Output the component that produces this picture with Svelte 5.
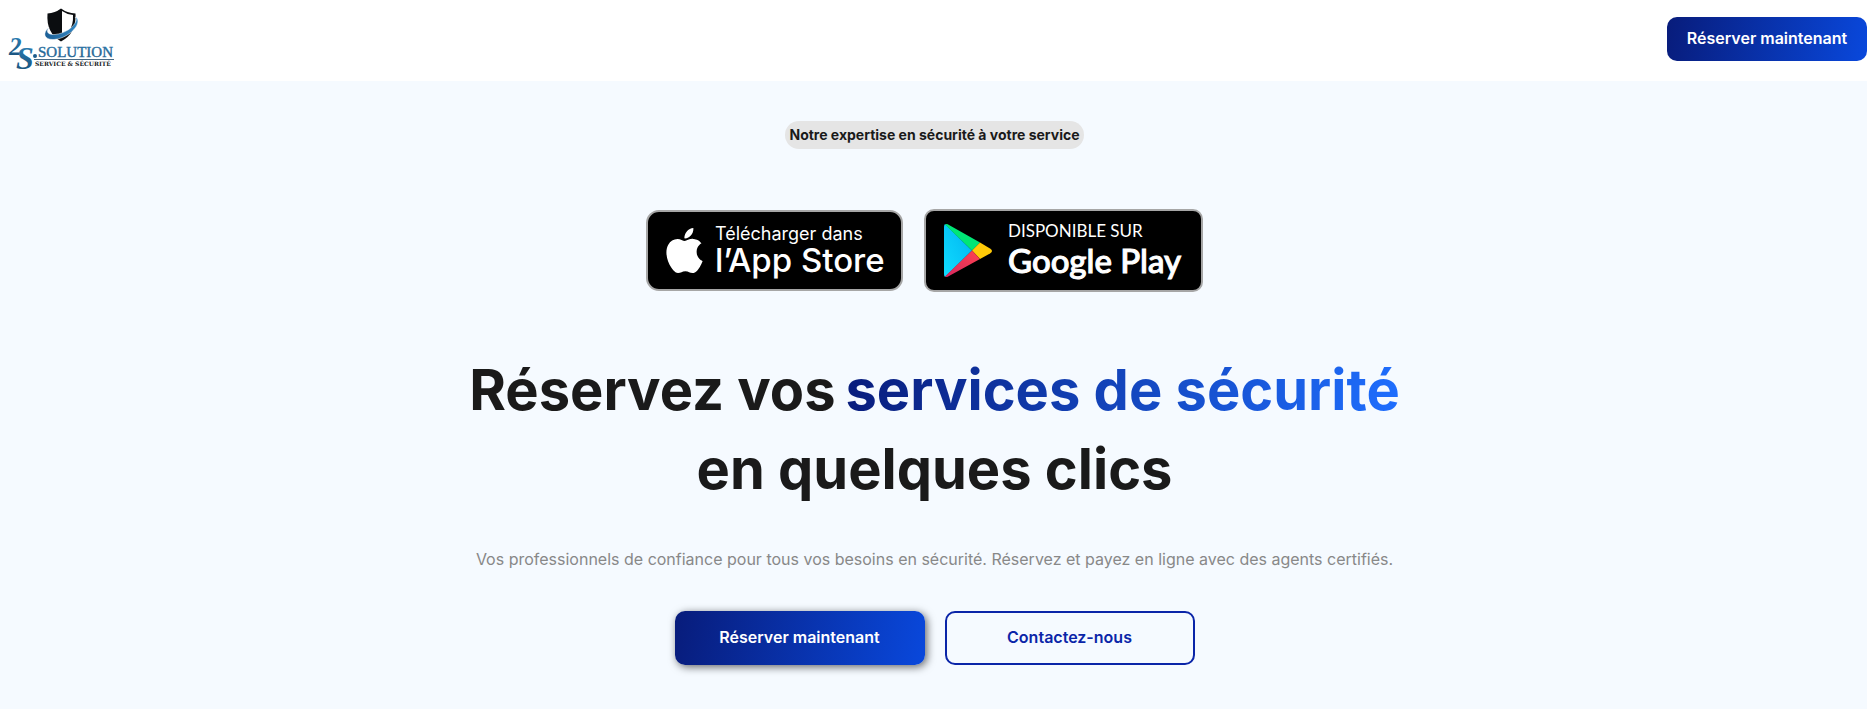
<script>
  const tagline = 'Notre expertise en sécurité à votre service';
</script>

<div class="page">
  <header>
    <a class="logo" href="#accueil" aria-label="2S.Solution">
      <svg width="120" height="72" viewBox="0 0 120 72">
        <defs>
          <linearGradient id="brand" x1="0" y1="0" x2="0" y2="1">
            <stop offset="0" stop-color="#2f86bd" />
            <stop offset="1" stop-color="#174a72" />
          </linearGradient>
          <linearGradient id="ring" x1="0" y1="0" x2="1" y2="0">
            <stop offset="0" stop-color="#1c5f96" />
            <stop offset="1" stop-color="#3388c4" />
          </linearGradient>
        </defs>
        <path d="M61 8.500Q67 13 75.500 13.500 77 33 61 41.500 46 33 47.500 13.500 55 13 61 8.500Z" fill="#0b0d10" />
        <path d="M62 11Q67 14.500 73 15 73.500 25 69 31L62 34Z" fill="#fff" />
        <path
          d="M49 27.500C46 31 47 35 55 34.500 65 33.500 74 27 76 21 76.500 19.500 76 18 75 17 79 18 78.500 23 76 27 71 34 62 39 54 39.500 44 40 42 33 49 27.500Z"
          fill="url(#ring)"
          stroke="#fff"
          stroke-width=".5"
        />
        <text class="two" x="9" y="55" fill="url(#brand)">2</text>
        <text class="ess" x="16" y="69" fill="url(#brand)">S</text>
        <circle cx="35" cy="56" r="2" fill="#1d5c8c" />
        <text class="name" x="38" y="57" fill="url(#brand)">SOLUTION</text>
        <path d="M34 59.500h80" stroke="#476a85" />
        <text class="sub" x="35" y="66" fill="#15191d">SERVICE &amp; SÉCURITÉ</text>
      </svg>
    </a>
    <button class="primary compact">Réserver maintenant</button>
  </header>

  <main>
    <span class="pill">{tagline}</span>

    <div class="stores">
      <a class="store apple" href="#app-store">
        <svg width="37" height="45" viewBox="2 0 20 24" preserveAspectRatio="none" aria-hidden="true">
          <path
            fill="#fff"
            d="M12.152 6.896c-.948 0-2.415-1.078-3.96-1.04-2.04.027-3.91 1.183-4.961 3.014-2.117 3.675-.546 9.103 1.519 12.09 1.013 1.454 2.208 3.09 3.792 3.039 1.52-.065 2.09-.987 3.935-.987 1.831 0 2.35.987 3.96.948 1.637-.026 2.676-1.48 3.676-2.948 1.156-1.688 1.636-3.325 1.662-3.415-.039-.013-3.182-1.221-3.22-4.857-.026-3.04 2.48-4.494 2.597-4.559-1.429-2.09-3.623-2.324-4.39-2.376-2-.156-3.675 1.09-4.61 1.09zM15.53 3.83c.843-1.012 1.4-2.427 1.245-3.83-1.207.052-2.662.805-3.532 1.818-.78.896-1.454 2.338-1.273 3.714 1.338.104 2.715-.688 3.559-1.701"
          />
        </svg>
        <span class="label">
          <span class="small">Télécharger dans</span>
          <span class="big">l’App Store</span>
        </span>
      </a>
      <a class="store google" href="#google-play">
        <svg width="48" height="53" viewBox="0 0 48 53" aria-hidden="true">
          <defs>
            <linearGradient id="cyan" x1="1" y1="0" x2="0" y2="1">
              <stop offset="0" stop-color="#00b4f0" />
              <stop offset="1" stop-color="#10dcff" />
            </linearGradient>
            <linearGradient id="red" x1="1" y1="0" x2="0" y2="1">
              <stop offset="0" stop-color="#ff4250" />
              <stop offset="1" stop-color="#d52860" />
            </linearGradient>
          </defs>
          <path d="M0 3Q0 1 1 0L28 26.500 1 53Q0 52 0 50Z" fill="url(#cyan)" />
          <path d="M1 0.500Q3-.500 5 1L36 18.500 28 26.500Z" fill="#00e676" />
          <path d="M36 18.500 46 24.500Q50 27 46 29.500L36 35 28 26.500Z" fill="#ffca08" />
          <path d="M1 52.500Q3 53.500 5 52L36 35 28 26.500Z" fill="url(#red)" />
        </svg>
        <span class="label">
          <span class="small">DISPONIBLE SUR</span>
          <span class="big">Google Play</span>
        </span>
      </a>
    </div>

    <h1>
      <span class="line">Réservez vos <span class="accent">services de sécurité</span></span>
      <span class="line">en quelques clics</span>
    </h1>

    <p>
      Vos professionnels de confiance pour tous vos besoins en sécurité. Réservez et payez en ligne
      avec des agents certifiés.
    </p>

    <div class="actions">
      <button class="primary raised">Réserver maintenant</button>
      <button class="outline">Contactez-nous</button>
    </div>
  </main>
</div>

<style>
  :global(body) {
    margin: 0;
    background: #f5faff;
  }

  .page {
    font-family: Inter, 'Liberation Sans', sans-serif;
    color: #1a1a1a;
  }

  header {
    display: flex;
    align-items: flex-start;
    justify-content: space-between;
    height: 81px;
    background: #fff;
  }

  .logo svg {
    display: block;
  }

  .two,
  .ess,
  .name {
    font-family: 'Liberation Serif', serif;
  }

  .two {
    font-size: 25px;
    font-style: italic;
    font-weight: 700;
  }

  .ess {
    font-size: 32px;
    font-style: italic;
    font-weight: 700;
  }

  .name {
    font-size: 15px;
    stroke: #2a6d9c;
    stroke-width: 0.4px;
  }

  .sub {
    font-family: 'DejaVu Serif', serif;
    font-size: 6px;
    font-weight: 700;
  }

  button {
    box-sizing: border-box;
    padding: 0 0 2px;
    border: 0;
    border-radius: 10px;
    font: 600 16px/20px Inter, 'Liberation Sans', sans-serif;
    cursor: pointer;
  }

  .primary {
    background: linear-gradient(100deg, #081c7b, #0948dc);
    color: #fff;
  }

  .compact {
    width: 200px;
    height: 44px;
    margin-top: 17px;
  }

  main {
    display: flex;
    flex-direction: column;
    align-items: center;
    padding: 40px 16px 32px 18px;
  }

  .pill {
    padding: 4px;
    border-radius: 14px;
    background: #e5e5e5;
    font-size: 14px;
    line-height: 20px;
    font-weight: 700;
  }

  .stores {
    display: flex;
    align-items: center;
    gap: 21px;
    margin-top: 60px;
    margin-right: 20px;
  }

  .store {
    box-sizing: border-box;
    display: flex;
    align-items: center;
    border: 2px solid #a6a6a6;
    background: #000;
    color: #fff;
    text-decoration: none;
    white-space: nowrap;
  }

  .apple {
    width: 257px;
    height: 81px;
    padding-left: 18px;
    gap: 12px;
    border-radius: 13px;
  }

  .google {
    width: 279px;
    height: 83px;
    padding-left: 18px;
    gap: 16px;
    border-radius: 10px;
    font-family: Lato, sans-serif;
  }

  .label {
    display: flex;
    flex-direction: column;
    padding-bottom: 2px;
  }

  .small {
    font-size: 18px;
    line-height: 20px;
  }

  .big {
    font-size: 33px;
    line-height: 32px;
    font-weight: 500;
  }

  .google .small {
    font-size: 17px;
  }

  .google .big {
    line-height: 38px;
    -webkit-text-stroke: 1px #fff;
  }

  h1 {
    margin: 59px 0 0;
    font-size: 56px;
    line-height: 79px;
    font-weight: 700;
  }

  .line {
    display: flex;
    flex-wrap: wrap;
    justify-content: center;
    column-gap: 10px;
  }

  .accent {
    background: linear-gradient(100deg, #081c7b, #1f6fff);
    background-clip: text;
    color: transparent;
  }

  p {
    margin: 38px 0 0;
    color: #888;
    font-size: 16px;
    line-height: 24px;
    text-align: center;
  }

  .actions {
    display: flex;
    flex-wrap: wrap;
    gap: 20px;
    margin-top: 40px;
  }

  .actions button {
    width: 250px;
    height: 54px;
  }

  .raised {
    box-shadow: 2px 2px 8px rgba(0, 0, 0, 0.6);
  }

  .outline {
    border: 2px solid #0a25a8;
    background: transparent;
    color: #0a25a8;
  }
</style>
